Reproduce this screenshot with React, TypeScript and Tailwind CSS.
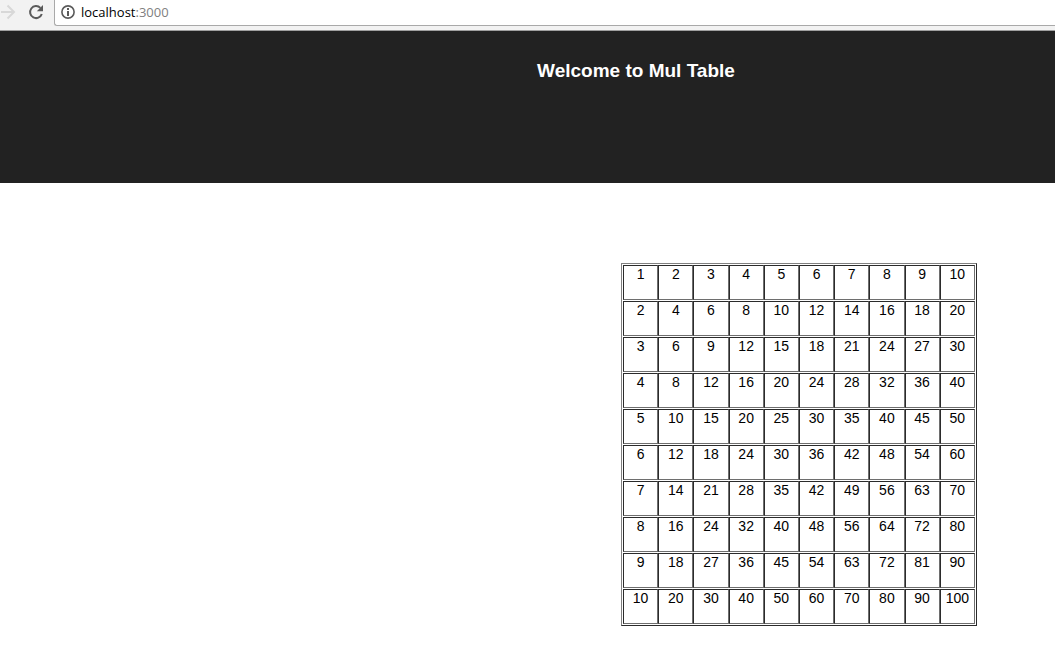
const numbers = Array.from({ length: 10 }, (_, i) => i + 1);

function BrowserBar() {
  return (
    <div className="flex h-[31px] items-start border-b border-[#a0a0a0] bg-[#f2f2f2]">
      <div className="flex h-6 w-[54px] shrink-0 items-center gap-3">
        <button type="button" aria-label="Forward" disabled className="block">
          <svg width="16" height="16" viewBox="0 0 16 16" fill="none" stroke="#d8d8d8" strokeWidth="2">
            <path d="M1 8H14M7.5 1.5L14 8L7.5 14.5" />
          </svg>
        </button>
        <button type="button" aria-label="Reload" className="block">
          <svg width="16" height="16" viewBox="0 0 16 16">
            <path d="M13.8 10A6 6 0 1 1 12.4 3.9" fill="none" stroke="#5a5a5a" strokeWidth="2" />
            <path d="M15 1V7.2H8.8Z" fill="#5a5a5a" />
          </svg>
        </button>
      </div>
      <div className="flex h-[26px] min-w-0 grow items-center gap-1.5 rounded-bl-[3px] border-b border-l border-[#a9a9a9] bg-white pb-px pl-1.5">
        <svg width="14" height="14" viewBox="0 0 14 14" className="shrink-0" aria-hidden="true">
          <circle cx="7" cy="7" r="6.1" fill="none" stroke="#5a5a5a" strokeWidth="1.6" />
          <path d="M6 3H8V5H6ZM6 6H8V11H6Z" fill="#5a5a5a" />
        </svg>
        <a href="http://localhost:3000" className="font-['Open_Sans',sans-serif] text-[13px] leading-5 text-black">
          localhost<span className="text-[#808080]">:3000</span>
        </a>
      </div>
    </div>
  );
}

function MulTable() {
  return (
    <table
      aria-label="Multiplication table"
      className="w-[356px] table-fixed border-separate border border-t-[#808080] border-r-[#2b2b2b] border-b-[#2b2b2b] border-l-[#808080] px-px text-center text-sm leading-4 [border-spacing:0_1px]"
    >
      <tbody>
        {numbers.map((row) => (
          <tr key={row}>
            {numbers.map((col) => (
              <td
                key={col}
                className="h-[35px] border border-t-[#2b2b2b] border-r-[#6e6e6e] border-b-[#6e6e6e] border-l-[#2b2b2b] p-0 align-top"
              >
                {row * col}
              </td>
            ))}
          </tr>
        ))}
      </tbody>
    </table>
  );
}

export default function App() {
  return (
    <div className="min-h-screen bg-white font-['Liberation_Sans',Arial,sans-serif] text-black">
      <BrowserBar />
      <header className="h-38 bg-[#222222] pt-7 pl-[217px] text-center text-white">
        <h1 className="text-[19px] leading-6 font-bold">Welcome to Mul Table</h1>
      </header>
      <main className="flex justify-end pt-20 pr-[78px] pb-4">
        <MulTable />
      </main>
    </div>
  );
}
